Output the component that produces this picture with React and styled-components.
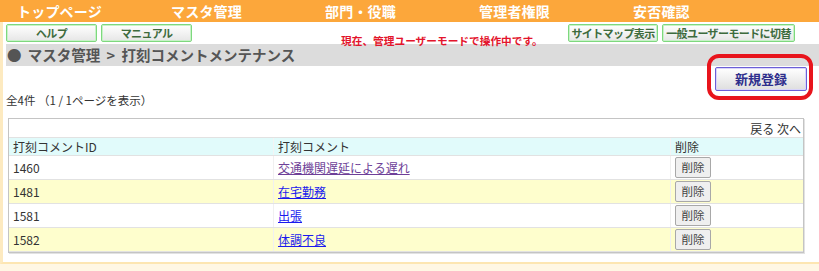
import React from "react";
import styled, { createGlobalStyle } from "styled-components";

const GlobalStyle = createGlobalStyle`
  body {
    margin: 0;
    background: #fff7e4;
    font-family: "Noto Sans CJK JP", "Noto Sans", sans-serif;
    color: #333;
  }
`;

const Page = styled.div`
  width: 819px;
  height: 271px;
  overflow: hidden;
`;

const NavBar = styled.div`
  height: 22px;
  background: #fca73b;
  display: grid;
  grid-template-columns: repeat(5, 154px);
  padding-left: 17px;
`;

const NavItem = styled.div`
  color: #fff;
  font-weight: bold;
  font-size: 14px;
  line-height: 22px;
  letter-spacing: 0.2px;
  white-space: nowrap;
`;

const Main = styled.div`
  background: #fff;
  border-left: 3px solid #fdeac0;
  border-bottom: 2px solid #fde6b2;
  height: 240px;
`;

const ToolRow = styled.div`
  height: 22px;
  display: flex;
  align-items: flex-start;
  padding: 2px 0 0 3px;
  box-sizing: border-box;
`;

const GreenButton = styled.div`
  width: ${(p) => p.$w}px;
  height: 18px;
  margin-right: 4px;
  box-sizing: border-box;
  border: 1px solid #7ed87e;
  box-shadow: inset 0 0 0 1px #c8f2c8;
  border-radius: 2px;
  background: linear-gradient(#ffffff, #e6e6e6);
  color: #3d6b3d;
  font-weight: bold;
  font-size: 11px;
  letter-spacing: -0.6px;
  line-height: 16px;
  text-align: center;
  white-space: nowrap;
`;

const Notice = styled.div`
  color: #e3142c;
  font-weight: bold;
  font-size: 10.7px;
  line-height: 12px;
  margin: 11px 0 0 145px;
  width: 227px;
  white-space: nowrap;
`;

const TitleBar = styled.div`
  margin-left: 3px;
  height: 22px;
  background: #dcdcdc;
  color: #555;
  font-weight: bold;
  font-size: 14.5px;
  line-height: 22px;
  padding-left: 1px;
  word-spacing: 3px;
  white-space: nowrap;
`;

const ActionRow = styled.div`
  display: flex;
  justify-content: flex-end;
  padding: 1px 12px 0 0;
  height: 26px;
  box-sizing: border-box;
`;

const Marked = styled.div`
  position: relative;
`;

const Ring = styled.div`
  position: absolute;
  top: -13px;
  bottom: -8px;
  left: -8px;
  right: -6px;
  border: 4px solid #e8141c;
  border-radius: 12px;
  box-sizing: border-box;
  pointer-events: none;
`;

const RegisterButton = styled.div`
  width: 92px;
  height: 24px;
  box-sizing: border-box;
  border: 1px solid #6b5fd6;
  box-shadow: inset 0 0 0 1px #d8d4fa;
  border-radius: 2px;
  background: linear-gradient(#ffffff, #dedede);
  color: #2e2e8c;
  font-weight: bold;
  font-size: 13px;
  line-height: 22px;
  text-align: center;
`;

const Count = styled.div`
  font-size: 11.5px;
  line-height: 14px;
  margin: 1px 0 11px 3px;
  color: #333;
`;

const TableBox = styled.div`
  margin-left: 5px;
  width: 796px;
  box-sizing: border-box;
  border: 1px solid #c4c4c4;
  box-shadow: 1px 1px 0 #e2e2e2;
`;

const Pager = styled.div`
  height: 18px;
  text-align: right;
  font-size: 12px;
  line-height: 20px;
  padding-right: 2px;
  border-bottom: 1px solid #e2e2e2;
`;

const Table = styled.table`
  width: 100%;
  border-collapse: collapse;
  font-size: 12px;
`;

const Th = styled.th`
  background: #e1fbfb;
  font-weight: normal;
  text-align: left;
  height: 17px;
  padding: 0 0 0 4px;
  width: ${(p) => (p.$w ? `${p.$w}px` : "auto")};
  border-left: 1px solid #f4f4f4;
  border-bottom: 1px solid #e2e2e2;
  &:first-child {
    border-left: none;
  }
`;

const Row = styled.tr`
  background: ${(p) => (p.$alt ? "#fefecd" : "#fff")};
`;

const Td = styled.td`
  height: 23px;
  padding: 0 0 0 4px;
  border-left: 1px solid #f0f0f0;
  border-bottom: 1px solid #e2e2e2;
  &:first-child {
    border-left: none;
  }
`;

const CommentLink = styled.a`
  color: ${(p) => (p.$visited ? "#6e3f98" : "#1a1aee")};
  text-decoration: underline;
`;

const DeleteButton = styled.div`
  width: 36px;
  height: 21px;
  box-sizing: border-box;
  border: 1px solid #a8a8a8;
  border-radius: 2px;
  background: #efefef;
  font-size: 11.5px;
  line-height: 19px;
  text-align: center;
  color: #444;
`;

const navItems = ["トップページ", "マスタ管理", "部門・役職", "管理者権限", "安否確認"];

const rows = [
  { id: "1460", comment: "交通機関遅延による遅れ", visited: true },
  { id: "1481", comment: "在宅勤務" },
  { id: "1581", comment: "出張" },
  { id: "1582", comment: "体調不良" },
];

export default function App() {
  return (
    <Page>
      <GlobalStyle />
      <NavBar>
        {navItems.map((n) => (
          <NavItem key={n}>{n}</NavItem>
        ))}
      </NavBar>
      <Main>
        <ToolRow>
          <GreenButton $w={91}>ヘルプ</GreenButton>
          <GreenButton $w={91}>マニュアル</GreenButton>
          <Notice>現在、管理ユーザーモードで操作中です。</Notice>
          <GreenButton $w={90}>サイトマップ表示</GreenButton>
          <GreenButton $w={133}>一般ユーザーモードに切替</GreenButton>
        </ToolRow>
        <TitleBar>● マスタ管理 &gt; 打刻コメントメンテナンス</TitleBar>
        <ActionRow>
          <Marked>
            <RegisterButton>新規登録</RegisterButton>
            <Ring />
          </Marked>
        </ActionRow>
        <Count>全4件 （1 / 1ページを表示）</Count>
        <TableBox>
          <Pager>戻る 次へ</Pager>
          <Table>
            <thead>
              <tr>
                <Th $w={260}>打刻コメントID</Th>
                <Th $w={392}>打刻コメント</Th>
                <Th>削除</Th>
              </tr>
            </thead>
            <tbody>
              {rows.map((r, i) => (
                <Row key={r.id} $alt={i % 2 === 1}>
                  <Td>{r.id}</Td>
                  <Td>
                    <CommentLink href="#" $visited={r.visited}>
                      {r.comment}
                    </CommentLink>
                  </Td>
                  <Td>
                    <DeleteButton>削除</DeleteButton>
                  </Td>
                </Row>
              ))}
            </tbody>
          </Table>
        </TableBox>
      </Main>
    </Page>
  );
}
